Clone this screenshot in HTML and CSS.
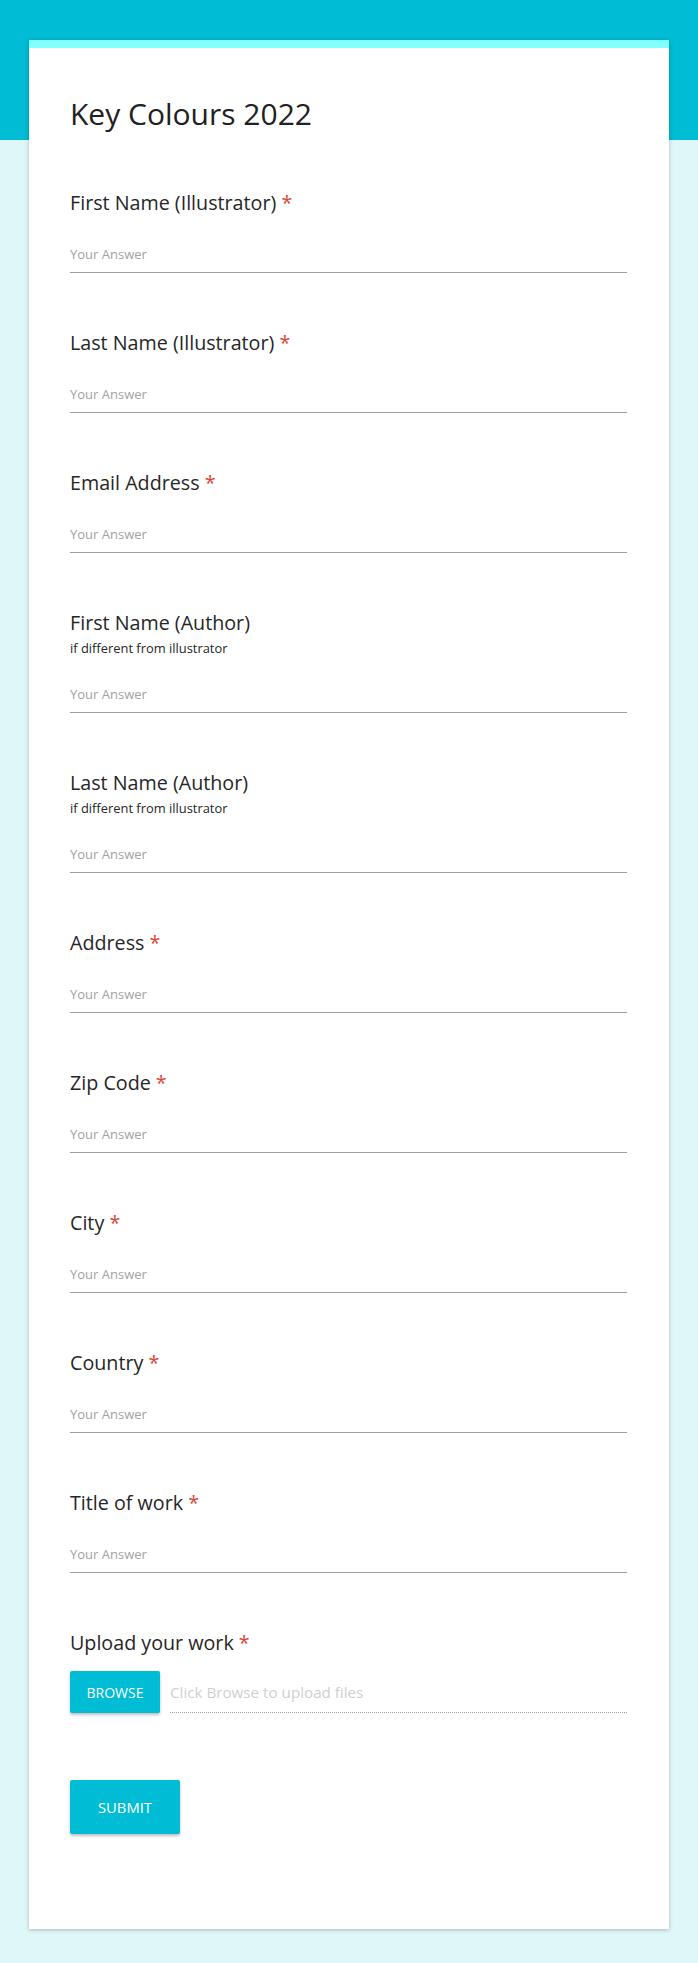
FILE: index.html
```html
<!DOCTYPE html>
<html lang="en">
<head>
<meta charset="utf-8">
<title>Key Colours 2022</title>
<link rel="stylesheet" href="styles.css">
</head>
<body>
<main class="card">
  <h1 class="title">Key Colours 2022</h1>
  <form class="form">
    <div class="field">
      <label class="label">First Name (Illustrator) <span class="req">*</span></label>
      <input class="answer" type="text" placeholder="Your Answer">
    </div>
    <div class="field">
      <label class="label">Last Name (Illustrator) <span class="req">*</span></label>
      <input class="answer" type="text" placeholder="Your Answer">
    </div>
    <div class="field">
      <label class="label">Email Address <span class="req">*</span></label>
      <input class="answer" type="text" placeholder="Your Answer">
    </div>
    <div class="field">
      <label class="label">First Name (Author)</label>
      <div class="help">if different from illustrator</div>
      <input class="answer" type="text" placeholder="Your Answer">
    </div>
    <div class="field">
      <label class="label">Last Name (Author)</label>
      <div class="help">if different from illustrator</div>
      <input class="answer" type="text" placeholder="Your Answer">
    </div>
    <div class="field">
      <label class="label">Address <span class="req">*</span></label>
      <input class="answer" type="text" placeholder="Your Answer">
    </div>
    <div class="field">
      <label class="label">Zip Code <span class="req">*</span></label>
      <input class="answer" type="text" placeholder="Your Answer">
    </div>
    <div class="field">
      <label class="label">City <span class="req">*</span></label>
      <input class="answer" type="text" placeholder="Your Answer">
    </div>
    <div class="field">
      <label class="label">Country <span class="req">*</span></label>
      <input class="answer" type="text" placeholder="Your Answer">
    </div>
    <div class="field">
      <label class="label">Title of work <span class="req">*</span></label>
      <input class="answer" type="text" placeholder="Your Answer">
    </div>
    <div class="field upload">
      <label class="label">Upload your work <span class="req">*</span></label>
      <div class="upload-row">
        <button type="button" class="btn btn-browse">BROWSE</button>
        <div class="filename">Click Browse to upload files</div>
      </div>
    </div>
    <button type="button" class="btn btn-submit">SUBMIT</button>
  </form>
</main>
</body>
</html>
```

FILE: styles.css
```css
html, body {
  margin: 0;
  padding: 0;
}
body {
  background: linear-gradient(#00bcd4 0, #00bcd4 140px, #e0f7fa 140px);
  min-height: 1963px;
  font-family: "Open Sans", "Noto Sans", sans-serif;
  color: #212121;
  padding-top: 40px;
  box-sizing: border-box;
}
.card {
  width: 640px;
  box-sizing: border-box;
  margin: 0 29px;
  background: #fff;
  border-top: 8px solid #84ffff;
  box-shadow: 0 1px 4px rgba(0, 0, 0, 0.25);
  padding: 46px 42px 95px 41px;
}
.title {
  margin: 0;
  font-size: 30px;
  line-height: 40px;
  font-weight: 400;
  color: #212121;
}
.form {
  margin-top: 55px;
  display: flex;
  flex-direction: column;
  align-items: flex-start;
}
.field {
  display: flex;
  flex-direction: column;
  width: 100%;
  margin-bottom: 56px;
}
.label {
  font-size: 19.7px;
  line-height: 28px;
  color: #262626;
}
.req {
  color: #db4437;
}
.help {
  font-size: 12.9px;
  line-height: 18px;
  margin-top: 2px;
  color: #262626;
}
.answer {
  margin-top: 27px;
  border: 0;
  border-bottom: 1px solid #9e9e9e;
  padding: 0 0 8px 0;
  height: 29px;
  box-sizing: border-box;
  font-family: inherit;
  font-size: 13px;
  line-height: 20px;
  color: #212121;
  background: transparent;
  outline: none;
  width: 100%;
}
.answer::placeholder {
  color: #a2a2a2;
  opacity: 1;
}
.upload {
  margin-bottom: 67px;
}
.upload-row {
  margin-top: 14px;
  display: flex;
  align-items: flex-end;
  gap: 10px;
}
.btn {
  border: 0;
  background: #00bcd4;
  color: #fff;
  font-family: inherit;
  border-radius: 2px;
  box-shadow: 0 2px 3px rgba(0, 0, 0, 0.25);
  cursor: pointer;
  padding: 0;
}
.btn-browse {
  width: 90px;
  height: 42px;
  font-size: 14px;
  flex: none;
}
.filename {
  flex: 1;
  font-size: 15.2px;
  line-height: 22px;
  color: #cfcfcf;
  padding-bottom: 9px;
  border-bottom: 1px dotted #9e9e9e;
}
.btn-submit {
  width: 110px;
  height: 54px;
  font-size: 14.8px;
}
```
